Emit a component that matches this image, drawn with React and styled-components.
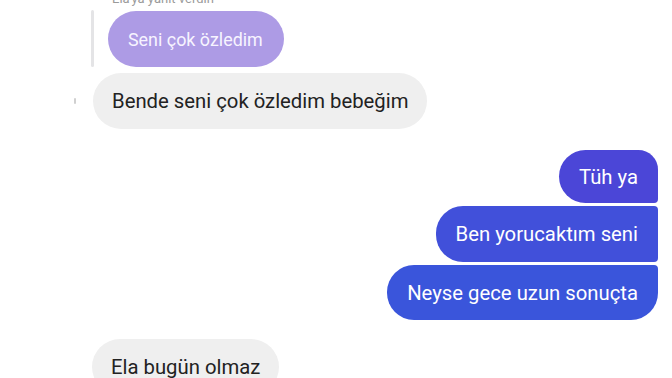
import React from "react";
import styled, { createGlobalStyle } from "styled-components";

const GlobalStyle = createGlobalStyle`
  html, body {
    margin: 0;
    padding: 0;
    background: #ffffff;
  }
  body {
    font-family: Roboto, "Noto Sans", "Liberation Sans", sans-serif;
    overflow: hidden;
  }
`;

const Thread = styled.div`
  width: 672px;
  height: 378px;
  overflow: hidden;
  display: flex;
  flex-direction: column;
  background: #fff;
`;

const ReplyNote = styled.div`
  height: 0;
  padding-left: 112px;
  font-size: 13px;
  line-height: 13px;
  color: #9a9a9a;
  transform: translateY(-8px);
  white-space: nowrap;
`;

const QuoteRow = styled.div`
  display: flex;
  align-items: stretch;
  gap: 14px;
  padding: 10px 0 0 91px;
`;

const QuoteBar = styled.div`
  width: 3px;
  border-radius: 2px;
  background: #e4e4e6;
`;

const QuotedBubble = styled.div`
  margin-top: 1px;
  height: 56px;
  padding: 0 21px 0 20px;
  display: flex;
  align-items: center;
  border-radius: 28px;
  background: #ad9be5;
  color: #f7f4ff;
  font-size: 17.9px;
`;

const IncomingRow = styled.div`
  display: flex;
  align-items: center;
  padding-left: ${(p) => p.$left || 92}px;
  margin-top: ${(p) => p.$top || 0}px;
  gap: 17px;
`;

const SeenMark = styled.div`
  width: 2px;
  height: 6px;
  border-radius: 1px;
  background: #d0d0d0;
  filter: blur(0.5px);
`;

const IncomingBubble = styled.div`
  height: 56px;
  padding: 0 19px 0 19px;
  display: flex;
  align-items: center;
  border-radius: 28px;
  background: #efefef;
  color: #222;
  font-size: 20.3px;
  white-space: nowrap;
`;

const OutgoingGroup = styled.div`
  display: flex;
  flex-direction: column;
  align-items: flex-end;
  gap: 3px;
  padding-right: 14px;
  margin-top: 21px;
`;

const OutgoingBubble = styled.div`
  height: ${(p) => p.$h || 55}px;
  padding: 0 20px;
  display: flex;
  align-items: center;
  background: ${(p) => p.$bg};
  color: #fff;
  font-size: 20.3px;
  white-space: nowrap;
  border-radius: ${(p) =>
    p.$pos === "first"
      ? "27px 20px 4px 27px"
      : p.$pos === "last"
      ? "27px 4px 27px 27px"
      : "27px 4px 4px 27px"};
`;

export default function App() {
  return (
    <>
      <GlobalStyle />
      <Thread>
        <ReplyNote>Ela'ya yanıt verdin</ReplyNote>
        <QuoteRow>
          <QuoteBar />
          <QuotedBubble>Seni çok özledim</QuotedBubble>
        </QuoteRow>
        <IncomingRow $left={74} $top={6}>
          <SeenMark />
          <IncomingBubble>Bende seni çok özledim bebeğim</IncomingBubble>
        </IncomingRow>
        <OutgoingGroup>
          <OutgoingBubble $pos="first" $h={53} $bg="#4b46d7">
            Tüh ya
          </OutgoingBubble>
          <OutgoingBubble $pos="middle" $h={56} $bg="#4150da">
            Ben yorucaktım seni
          </OutgoingBubble>
          <OutgoingBubble $pos="last" $h={55} $bg="#3a55db">
            Neyse gece uzun sonuçta
          </OutgoingBubble>
        </OutgoingGroup>
        <IncomingRow $top={19}>
          <IncomingBubble>Ela bugün olmaz</IncomingBubble>
        </IncomingRow>
      </Thread>
    </>
  );
}
